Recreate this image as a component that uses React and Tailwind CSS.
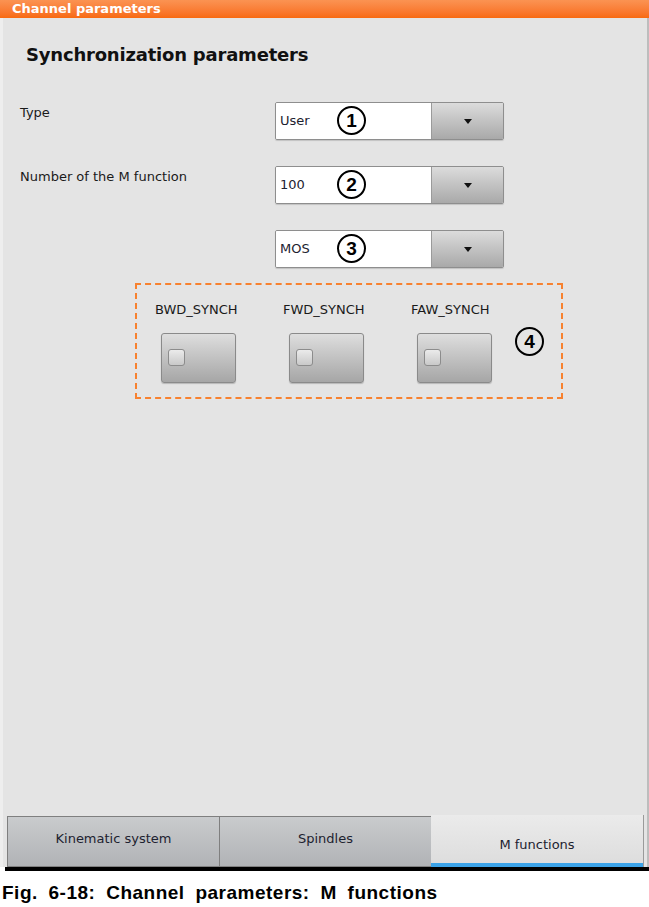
import React from 'react';

const ui = { fontFamily: '"DejaVu Sans", "Noto Sans", sans-serif' };

function Circled({ n }) {
  return (
    <span className="inline-flex h-[29px] w-[29px] items-center justify-center rounded-full border-2 border-black text-[19px] font-bold leading-none text-black" style={{ fontFamily: '"Liberation Sans", sans-serif' }}>
      {n}
    </span>
  );
}

function Dropdown({ value, n }) {
  return (
    <div className="flex h-[38px] w-[229px] overflow-hidden rounded-[2px] border border-[#8e8e8e] shadow-[0_1px_1px_rgba(0,0,0,0.15)]">
      <div className="relative flex w-[155px] items-center bg-white pl-[4px] text-[13px] text-[#1d2230]">
        {value}
        <div className="absolute left-[61px] top-[3px]">
          <Circled n={n} />
        </div>
      </div>
      <div className="flex flex-1 items-center justify-center border-l border-[#9a9a9a] bg-gradient-to-b from-[#dcdcdc] to-[#a9a9a9]">
        <svg width="8" height="5" viewBox="0 0 8 5"><path d="M0 0h8L4 5z" fill="#111" /></svg>
      </div>
    </div>
  );
}

function SyncButton({ label }) {
  return (
    <div className="flex w-[128px] flex-col items-start">
      <div className="h-[18px] pl-[18px] text-[13px] leading-[18px] text-[#1a1a1a]">{label}</div>
      <div className="ml-[24px] mt-[14px] flex h-[50px] w-[75px] items-start rounded-[3px] border border-[#8a8a8a] bg-gradient-to-b from-[#dedede] to-[#a6a6a6] pl-[6px] pt-[15px] shadow-[0_1px_1px_rgba(0,0,0,0.2)]">
        <div className="h-[17px] w-[17px] rounded-[3px] border border-[#8c8c8c] bg-gradient-to-b from-[#ebebeb] to-[#c9c9c9]" />
      </div>
    </div>
  );
}

function Tab({ label, active }) {
  if (active) {
    return (
      <div className="flex h-[52px] w-[213px] flex-col border-r border-[#9a9a9a] bg-gradient-to-b from-[#ebebeb] to-[#dcdcdc]">
        <div className="flex flex-1 items-center justify-center pt-[12px] text-[13px] text-[#1d2230]">{label}</div>
        <div className="h-[4px] bg-[#3ba3e8]" />
      </div>
    );
  }
  return (
    <div className="-mr-px flex h-[51px] w-[213px] items-center justify-center border border-[#7f7f7f] bg-gradient-to-b from-[#c9cbcd] to-[#b1b3b6] pb-[6px] text-[13px] text-[#1d2230]">
      {label}
    </div>
  );
}

export default function App() {
  return (
    <div className="h-[907px] w-[649px] bg-white">
      <div className="flex h-[871px] flex-col">
        <div className="h-[18px] bg-gradient-to-b from-[#fb9352] to-[#f86a0e] pl-[12px] text-[13px] font-bold leading-[18px] text-white" style={ui}>
          Channel parameters
        </div>
        <div className="flex flex-1 flex-col border-l-[3px] border-r-[2px] border-l-[#eeeeee] border-r-[#bdbdbd] bg-[#e4e4e4]" style={ui}>
          <div className="pl-[23px] pt-[25px] text-[18px] font-bold leading-[24px] tracking-[-0.2px] text-[#111]">Synchronization parameters</div>

          <div className="mt-[35px] flex flex-col gap-[26px] pl-[17px]">
            <div className="flex">
              <div className="w-[255px] pt-[1px] text-[13px] text-[#1a1a1a]">Type</div>
              <Dropdown value="User" n="1" />
            </div>
            <div className="flex">
              <div className="w-[255px] pt-[1px] text-[13px] text-[#1a1a1a]">Number of the M function</div>
              <Dropdown value="100" n="2" />
            </div>
            <div className="flex">
              <div className="w-[255px]" />
              <Dropdown value="MOS" n="3" />
            </div>
          </div>

          <div className="ml-[132px] mt-[15px] flex h-[116px] w-[428px] items-start border-2 border-dashed border-[#f7812f] pt-[16px]">
            <SyncButton label="BWD_SYNCH" />
            <SyncButton label="FWD_SYNCH" />
            <SyncButton label="FAW_SYNCH" />
            <div className="ml-[-6px] mt-[26px]">
              <Circled n="4" />
            </div>
          </div>

          <div className="flex-1" />

          <div className="flex items-end pl-[4px]">
            <Tab label="Kinematic system" />
            <Tab label="Spindles" />
            <Tab label="M functions" active />
          </div>
        </div>
        <div className="ml-[5px] h-[4px] bg-black" />
      </div>
      <div className="mt-[11px] pl-[2px] text-[19px] font-bold leading-[22px] tracking-[0.5px] text-black" style={{ fontFamily: '"Liberation Sans", sans-serif', wordSpacing: '5px' }}>
        Fig. 6-18: Channel parameters: M functions
      </div>
    </div>
  );
}
